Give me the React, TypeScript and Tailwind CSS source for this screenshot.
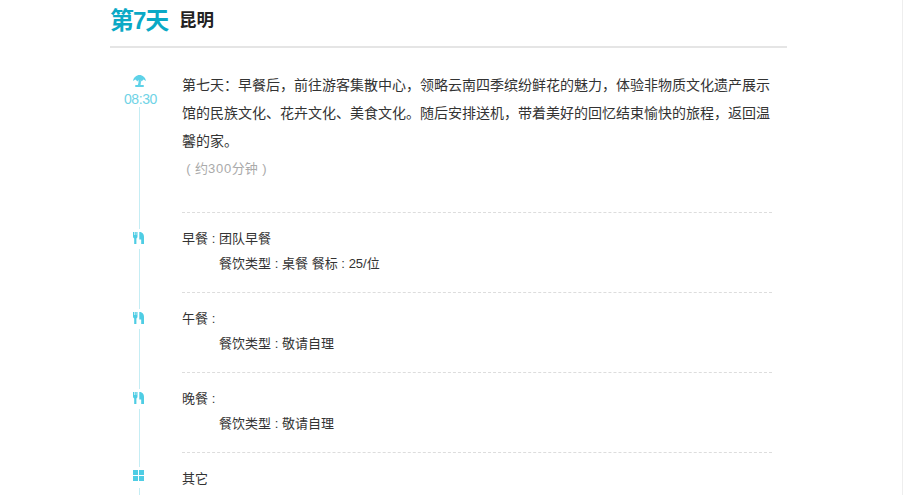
import React from "react";

const font = {
  cjk: "font-['Liberation_Sans','Noto_Sans_CJK_SC',sans-serif]",
};

function PalmIcon() {
  return (
    <svg width="13" height="12" viewBox="0 0 13 12" className="mr-[3px] block shrink-0 fill-[#5ed2e8]">
      <path d="M0 6C0.5 2.500 3.500 0 6.500 0C9.500 0 12.500 2.500 13 6L10.500 4.500L8.500 6.500L7.800 4.800C8.100 6.700 7.900 8.500 7.500 10H4.800C5.500 8.300 5.700 6.600 5.400 4.800L4.500 6.500L2.500 4.500Z" />
      <rect x="2" y="10" width="9" height="2" rx="1" />
    </svg>
  );
}

function MealIcon() {
  return (
    <svg width="11" height="12" viewBox="0 0 11 12" className="block shrink-0 fill-[#4fcde4]">
      <path d="M0 0H1.200V3H1.800V0H2.800V3H3.300V0H4.500V4.500Q4.500 6 3.400 6.400V12H1.200V6.400Q0 6 0 4.500Z" />
      <path d="M6.300 0C9 0 11 1.500 11 5V12H8.200V7.500H6.300Z" />
    </svg>
  );
}

function GridIcon() {
  return (
    <svg width="11" height="11" viewBox="0 0 11 11" className="block shrink-0 fill-[#4fcde4]">
      <rect x="0" y="0" width="5" height="5" />
      <rect x="6" y="0" width="5" height="5" />
      <rect x="0" y="6" width="5" height="5" />
      <rect x="6" y="6" width="5" height="5" />
    </svg>
  );
}

function Colon() {
  return <span className="inline-block w-[11px] text-center">:</span>;
}

function TimelineItem({
  icon,
  children,
  last,
}: {
  icon: React.ReactNode;
  children: React.ReactNode;
  last?: boolean;
}) {
  return (
    <div className="flex">
      <div className={`w-[72px] shrink-0 ${last ? "pt-[14px]" : "pt-[16px]"}`}>
        <div
          className={`relative ml-[19px] flex w-[19px] justify-center bg-white pt-[3px] ${
            last ? "h-[21px]" : "h-[20px]"
          }`}
        >
          {icon}
        </div>
      </div>
      <div
        className={`h-[80px] w-[590px] border-dashed border-[#dddddd] pt-[13px] ${
          last ? "" : "border-b"
        }`}
      >
        {children}
      </div>
    </div>
  );
}

function MealRow({ name, value, detail }: { name: string; value?: string; detail: React.ReactNode }) {
  return (
    <>
      <p className="h-[25px] text-[13px] leading-[25px] text-[#333]">
        {name}
        <Colon />
        {value}
      </p>
      <p className="h-[25px] pl-[37px] text-[13px] leading-[25px] text-[#333]">{detail}</p>
    </>
  );
}

export default function App() {
  return (
    <div className={`h-[495px] overflow-hidden border-r border-[#eeeeee] bg-white ${font.cjk}`}>
      <div className="ml-[110px] w-[677px]">
        <header className="flex h-[48px] items-center border-b-2 border-[#e5e5e5] pt-[2px] pb-[6px]">
          <h1 className="w-[69px] text-[24px] leading-[34px] font-bold tracking-[-1px] text-[#0aa9c6]">第7天</h1>
          <h2 className="pb-[2px] text-[17.500px] leading-[24px] font-bold text-[#222]">昆明</h2>
        </header>

        <div className="relative pt-[24px]">
          {/* vertical line of the timeline, behind the icons */}
          <div className="absolute top-[58px] bottom-0 left-[29px] w-px bg-[#c5edf4]" />

          <div className="flex">
            <div className="w-[72px] shrink-0">
              <div className="relative ml-[8px] flex h-[35px] w-[45px] flex-col items-center bg-white pt-[3px]">
                <PalmIcon />
                <span className="mt-[2px] text-[14px] leading-[20px] tracking-[-0.4px] text-[#6fd3e6]">08:30</span>
              </div>
            </div>
            <div className="-mt-px h-[142px] w-[590px] border-b border-dashed border-[#dddddd]">
              <p className="text-[14px] leading-[28px] text-[#333]">
                第七天：早餐后，前往游客集散中心，领略云南四季缤纷鲜花的魅力，体验非物质文化遗产展示馆的民族文化、花卉文化、美食文化。随后安排送机，带着美好的回忆结束愉快的旅程，返回温馨的家。
              </p>
              <p className="mt-[1px] text-[13px] leading-[26px] text-[#aaaaaa]">
                <span className="inline-block w-[13px] text-center">(</span>
                约<span className="tracking-[0.7px]">300</span>分钟
                <span className="inline-block w-[13px] text-center">)</span>
              </p>
            </div>
          </div>

          <TimelineItem icon={<MealIcon />}>
            <MealRow
              name="早餐"
              value="团队早餐"
              detail={
                <>
                  餐饮类型
                  <Colon />
                  桌餐 餐标
                  <Colon />
                  25/位
                </>
              }
            />
          </TimelineItem>
          <TimelineItem icon={<MealIcon />}>
            <MealRow
              name="午餐"
              detail={
                <>
                  餐饮类型
                  <Colon />
                  敬请自理
                </>
              }
            />
          </TimelineItem>
          <TimelineItem icon={<MealIcon />}>
            <MealRow
              name="晚餐"
              detail={
                <>
                  餐饮类型
                  <Colon />
                  敬请自理
                </>
              }
            />
          </TimelineItem>
          <TimelineItem icon={<GridIcon />} last>
            <p className="h-[25px] text-[13px] leading-[25px] text-[#333]">其它</p>
          </TimelineItem>
        </div>
      </div>
    </div>
  );
}
